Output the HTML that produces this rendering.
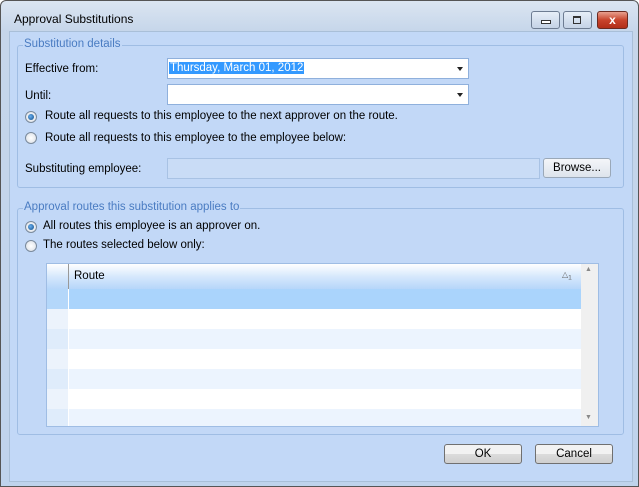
<!DOCTYPE html><html><head><style>
body{margin:0;width:639px;height:487px;overflow:hidden;background:#fff;font-family:"Liberation Sans",sans-serif;font-size:11.5px;color:#000}
.win{position:absolute;left:0;top:0;width:637px;height:485px;border:1px solid #555;border-radius:6px 6px 0 0;background:linear-gradient(#dbe5f1,#c6d6ea 30px,#bfd3ec);}
.client{position:absolute;left:8px;top:30px;width:622px;height:449px;background:#c2d8f7;border:1px solid #a9bfd8}
.t{position:absolute;white-space:nowrap}
.grp{position:absolute;border:1px solid #9fbde4;border-radius:3px}
.leg{position:absolute;background:#c2d8f7;color:#4a7cc2;padding:0 1px}
.inp{position:absolute;background:#fff;border:1px solid #8fb0dc;height:19px}
.arr{position:absolute;right:5px;top:8px;width:0;height:0;border-left:3px solid transparent;border-right:3px solid transparent;border-top:4px solid #222}
.rad{position:absolute;width:10px;height:10px;border-radius:50%;border:1px solid #7a8a9c;background:radial-gradient(#fff,#d8dde4)}
.rad.on::after{content:"";position:absolute;left:2px;top:2px;width:6px;height:6px;border-radius:50%;background:radial-gradient(circle at 40% 40%,#6ab0f0,#0d4a86)}
.btn{position:absolute;border:1px solid #707070;border-radius:3px;background:linear-gradient(#f2f2f2 50%,#dcdcdc 50%,#cfcfcf);text-align:center;line-height:18px}
.tb{position:absolute;top:10px;height:16px;border:1px solid #6d7c92;border-radius:3px;background:linear-gradient(#e6eef8,#c5d3e6)}
</style></head><body>
<div class="win">
<div class="t" style="left:13px;top:11px;font-size:12px">Approval Substitutions</div>
<div class="tb" style="left:530px;width:27px"><div style="position:absolute;left:9px;top:8px;width:8px;height:2px;border:1px solid #333;background:#fff"></div></div>
<div class="tb" style="left:562px;width:27px"><div style="position:absolute;left:9px;top:4px;width:6px;height:5px;border:1px solid #333;border-top-width:2px"></div></div>
<div class="tb" style="left:596px;width:29px;background:linear-gradient(#e8a08e,#c8442c 50%,#b22e18);border-color:#6b2a20;color:#fff;font-weight:bold;text-align:center;line-height:16px;font-size:12px">x</div>
<div class="client"></div>
<div class="grp" style="left:16px;top:44px;width:605px;height:141px"></div>
<div class="leg t" style="left:22px;top:37px">Substitution details</div>
<div class="t" style="left:24px;top:62px">Effective from:</div>
<div class="inp" style="left:166px;top:57px;width:300px"><span style="position:absolute;left:1px;top:3px;background:#3399ff;color:#fff;padding:0 1px">Thursday, March 01, 2012</span><div class="arr"></div></div>
<div class="t" style="left:24px;top:89px">Until:</div>
<div class="inp" style="left:166px;top:83px;width:300px"><div class="arr"></div></div>
<div class="rad on" style="left:24px;top:110px"></div><div class="t" style="left:44px;top:109px">Route all requests to this employee to the next approver on the route.</div>
<div class="rad" style="left:24px;top:131px"></div><div class="t" style="left:44px;top:131px">Route all requests to this employee to the employee below:</div>
<div class="t" style="left:24px;top:162px">Substituting employee:</div>
<div class="inp" style="left:166px;top:157px;width:371px;background:#c9dcf6;border-color:#a8c2e4"></div>
<div class="btn" style="left:542px;top:157px;width:66px;height:18px;background:linear-gradient(#f4f6f9,#dde4ec);border-color:#9aa8b8">Browse...</div>
<div class="grp" style="left:16px;top:207px;width:605px;height:225px"></div>
<div class="leg t" style="left:22px;top:200px">Approval routes this substitution applies to</div>
<div class="rad on" style="left:24px;top:220px"></div><div class="t" style="left:42px;top:219px">All routes this employee is an approver on.</div>
<div class="rad" style="left:24px;top:239px"></div><div class="t" style="left:42px;top:238px">The routes selected below only:</div>
<div style="position:absolute;left:45px;top:262px;width:551px;height:162px;border:1px solid #9fbde4;background:#fff">
<div style="position:absolute;left:0;top:0;width:534px;height:25px;background:linear-gradient(#fff,#d6e8fc 50%,#b6d6fa)"></div>
<div style="position:absolute;left:21px;top:0;width:1px;height:31px;background:#999"></div>
<div class="t" style="left:27px;top:6px">Route</div>
<div class="t" style="left:515px;top:6px;font-size:8px;color:#666">△<sub>1</sub></div>
<div style="position:absolute;left:0;top:25px;width:534px;height:20px;background:#aad4fc"></div>
<div style="position:absolute;left:0;top:45px;width:534px;height:20px;background:#fff"></div>
<div style="position:absolute;left:0;top:65px;width:534px;height:20px;background:#ecf4fe"></div>
<div style="position:absolute;left:0;top:85px;width:534px;height:20px;background:#fff"></div>
<div style="position:absolute;left:0;top:105px;width:534px;height:20px;background:#ecf4fe"></div>
<div style="position:absolute;left:0;top:125px;width:534px;height:20px;background:#fff"></div>
<div style="position:absolute;left:0;top:145px;width:534px;height:17px;background:#ecf4fe"></div>
<div style="position:absolute;left:21px;top:25px;width:1px;height:137px;background:#fff"></div>
<div style="position:absolute;left:0;top:25px;width:21px;height:137px;background:rgba(200,220,245,.35)"></div>
<div style="position:absolute;left:534px;top:0;width:17px;height:162px;background:#f0f0f0"></div>
<div class="t" style="left:538px;top:2px;font-size:7px;color:#888">▲</div>
<div class="t" style="left:538px;top:150px;font-size:7px;color:#888">▼</div>
</div>
<div class="btn" style="left:443px;top:443px;width:76px;height:18px">OK</div>
<div class="btn" style="left:534px;top:443px;width:76px;height:18px">Cancel</div>
</div>
</body></html>
